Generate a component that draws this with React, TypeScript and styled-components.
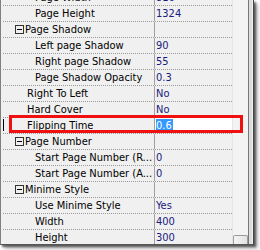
import React from "react";
import styled, { createGlobalStyle } from "styled-components";

const Global = createGlobalStyle`
  html, body { margin: 0; padding: 0; background: #ffffff; }
  body { width: 260px; height: 250px; overflow: hidden; }
`;

const Stage = styled.div`
  position: relative;
  width: 260px;
  height: 250px;
  overflow: hidden;
  background: #ffffff;
`;

const Frame = styled.div`
  display: flex;
  width: 254px;
  height: 245px;
  box-sizing: border-box;
  border-left: 1px solid #7f7f7f;
  border-bottom: 1px solid #555555;
  border-right: 1px solid #444444;
  background: #f0f0f0;
  overflow: hidden;
  box-shadow: 2px 2px 2px rgba(0, 0, 0, 0.55), 4px 4px 4px rgba(0, 0, 0, 0.25);
`;

const Grid = styled.div`
  width: 231px;
  padding-left: 2px;
  box-sizing: border-box;
  margin-top: -10px;
  font-family: "DejaVu Sans Condensed", "Liberation Sans", sans-serif;
  font-size: 11px;
`;

const Row = styled.div<{ $editing?: boolean }>`
  position: relative;
  display: flex;
  height: 16px;
  box-sizing: border-box;
  border-bottom: 1px dotted #9a9a9a;
  ${(p) =>
    p.$editing &&
    `&::before {
      content: "";
      position: absolute;
      left: 0;
      top: 1px;
      width: 1px;
      height: 12px;
      background: #000;
    }`}
`;

const Name = styled.div<{ $indent: number }>`
  display: flex;
  align-items: center;
  width: 152px;
  flex: none;
  box-sizing: border-box;
  padding-left: ${(p) => p.$indent}px;
  border-right: 1px solid #a0a0a0;
  line-height: 15px;
  color: #000000;
  white-space: nowrap;
  overflow: hidden;
`;

const Value = styled.div<{ $editing?: boolean }>`
  flex: 1;
  padding-left: 1px;
  line-height: 15px;
  color: #1a1a80;
  white-space: nowrap;
  overflow: hidden;
  background: ${(p) => (p.$editing ? "#ffffff" : "transparent")};
`;

const Selected = styled.span`
  display: inline-block;
  background: #3399ff;
  color: #ffffff;
  line-height: 13px;
  padding-right: 1px;
`;

const ExpandBox = styled.span`
  position: relative;
  display: inline-block;
  width: 9px;
  height: 9px;
  box-sizing: border-box;
  border: 1px solid #333333;
  margin-right: 1px;
  flex: none;
  &::after {
    content: "";
    position: absolute;
    left: 1px;
    top: 3px;
    width: 5px;
    height: 1px;
    background: #000;
  }
`;

const Scrollbar = styled.div`
  display: flex;
  flex-direction: column;
  justify-content: flex-end;
  width: 17px;
  box-sizing: border-box;
  background: #f3f3f3;
  border-left: 1px solid #e6e6e6;
  border-right: 1px solid #777777;
`;

const Thumb = styled.div`
  height: 10px;
  margin: 0 0 -2px 0;
  border: 1px solid #9c9c9c;
  border-bottom: none;
  border-radius: 2px 2px 0 0;
  background: linear-gradient(to right, #f4f4f4, #e2e2e2);
`;

const Edge = styled.div`
  width: 3px;
  background: #dcdcdc;
`;

const Callout = styled.div`
  position: absolute;
  left: 9px;
  top: 115px;
  width: 234px;
  height: 18px;
  box-sizing: border-box;
  border: 3px solid #f01010;
  pointer-events: none;
`;

type Item = {
  name: string;
  value?: string;
  indent?: number;
  cat?: boolean;
  editing?: boolean;
};

const rows: Item[] = [
  { name: "Page Width", value: "816", indent: 32 },
  { name: "Page Height", value: "1324", indent: 32 },
  { name: "Page Shadow", cat: true },
  { name: "Left page Shadow", value: "90", indent: 32 },
  { name: "Right page Shadow", value: "55", indent: 32 },
  { name: "Page Shadow Opacity", value: "0.3", indent: 32 },
  { name: "Right To Left", value: "No", indent: 24 },
  { name: "Hard Cover", value: "No", indent: 24 },
  { name: "Flipping Time", value: "0.6", indent: 24, editing: true },
  { name: "Page Number", cat: true },
  { name: "Start Page Number (R...", value: "0", indent: 32 },
  { name: "Start Page Number (A...", value: "0", indent: 32 },
  { name: "Minime Style", cat: true },
  { name: "Use Minime Style", value: "Yes", indent: 32 },
  { name: "Width", value: "400", indent: 32 },
  { name: "Height", value: "300", indent: 32 },
];

export default function App() {
  return (
    <Stage>
      <Global />
      <Frame>
        <Grid>
          {rows.map((r) => (
            <Row key={r.name} $editing={r.editing}>
              <Name $indent={r.cat ? 12 : r.indent ?? 32}>
                {r.cat && <ExpandBox />}
                {r.name}
              </Name>
              <Value $editing={r.editing}>
                {r.editing ? <Selected>{r.value}</Selected> : r.value}
              </Value>
            </Row>
          ))}
        </Grid>
        <Scrollbar>
          <Thumb />
        </Scrollbar>
        <Edge />
      </Frame>
      <Callout />
    </Stage>
  );
}
